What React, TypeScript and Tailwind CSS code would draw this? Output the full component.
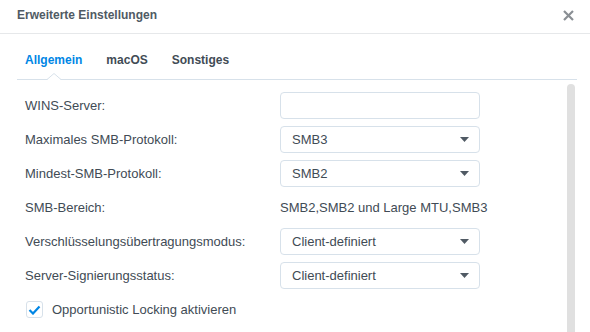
import React from "react";

const font = { fontFamily: '"Liberation Sans", Arial, sans-serif' };

const Select = ({ value }: { value: string }) => (
  <div className="flex h-[27px] w-[200px] items-center justify-between rounded-[4px] border border-[#d7e1ea] bg-white pl-[11px] pr-[10px] text-[13px] text-[#414b55]">
    <span>{value}</span>
    <svg width="9" height="5" viewBox="0 0 9 5">
      <path d="M0 0h9L4.5 5z" fill="#505a64" />
    </svg>
  </div>
);

const Row = ({ label, children }: { label: string; children: React.ReactNode }) => (
  <div className="flex h-[27px] items-center">
    <div className="w-[255px] text-[13px] text-[#414b55]">{label}</div>
    {children}
  </div>
);

export default function App() {
  return (
    <div className="h-[332px] w-[590px] overflow-hidden bg-white" style={font}>
      <div className="flex h-[34px] items-center justify-between border-b border-[#e6e8ea] pb-[3px] pl-[17px] pr-[16px]">
        <span className="text-[12px] font-bold text-[#505a64]">Erweiterte Einstellungen</span>
        <svg width="11" height="11" viewBox="0 0 11 11">
          <path d="M1 1l9 9M10 1l-9 9" stroke="#8a8f94" strokeWidth="2.2" />
        </svg>
      </div>

      <div className="ml-[17px] mr-[13px] flex gap-2 border-b border-[#d7e1ea] pt-[19px] pb-[12px] text-[12px] font-bold leading-[14px]">
        <div className="relative px-2 text-[#0086e5]">
          Allgemein
          <svg
            className="absolute left-1/2 top-[20px] -translate-x-1/2"
            width="14"
            height="7"
            viewBox="0 0 14 7"
          >
            <path d="M0 7L7 0l7 7z" fill="#fff" />
            <path d="M0 6.5L7 0.5l7 6" fill="none" stroke="#d7e1ea" />
          </svg>
        </div>
        <div className="px-2 text-[#414b55]">macOS</div>
        <div className="px-2 text-[#414b55]">Sonstiges</div>
      </div>

      <div className="ml-[17px] mr-[13px] flex">
        <div className="flex flex-1 flex-col gap-[7px] pl-[8px] pt-[12px]">
          <Row label="WINS-Server:">
            <div className="h-[27px] w-[200px] rounded-[4px] border border-[#d7e1ea]" />
          </Row>
          <Row label="Maximales SMB-Protokoll:">
            <Select value="SMB3" />
          </Row>
          <Row label="Mindest-SMB-Protokoll:">
            <Select value="SMB2" />
          </Row>
          <Row label="SMB-Bereich:">
            <span className="text-[13px] text-[#414b55]">SMB2,SMB2 und Large MTU,SMB3</span>
          </Row>
          <Row label="Verschlüsselungsübertragungsmodus:">
            <Select value="Client-definiert" />
          </Row>
          <Row label="Server-Signierungsstatus:">
            <Select value="Client-definiert" />
          </Row>
          <div className="flex h-[27px] items-center">
            <div className="ml-[1px] flex h-[17px] w-[17px] items-center justify-center rounded-[3px] border border-[#d7e1ea]">
              <svg width="13" height="10" viewBox="0 0 13 10">
                <path d="M1.5 5l3.5 3.5L11.5 1.5" fill="none" stroke="#0086e5" strokeWidth="2.2" />
              </svg>
            </div>
            <span className="ml-[9px] text-[13px] text-[#414b55]">Opportunistic Locking aktivieren</span>
          </div>
        </div>
        <div className="mr-[2px] mt-[4px] h-[300px] w-[8px] rounded-[4px] bg-[#e0e0e0]" />
      </div>
    </div>
  );
}
